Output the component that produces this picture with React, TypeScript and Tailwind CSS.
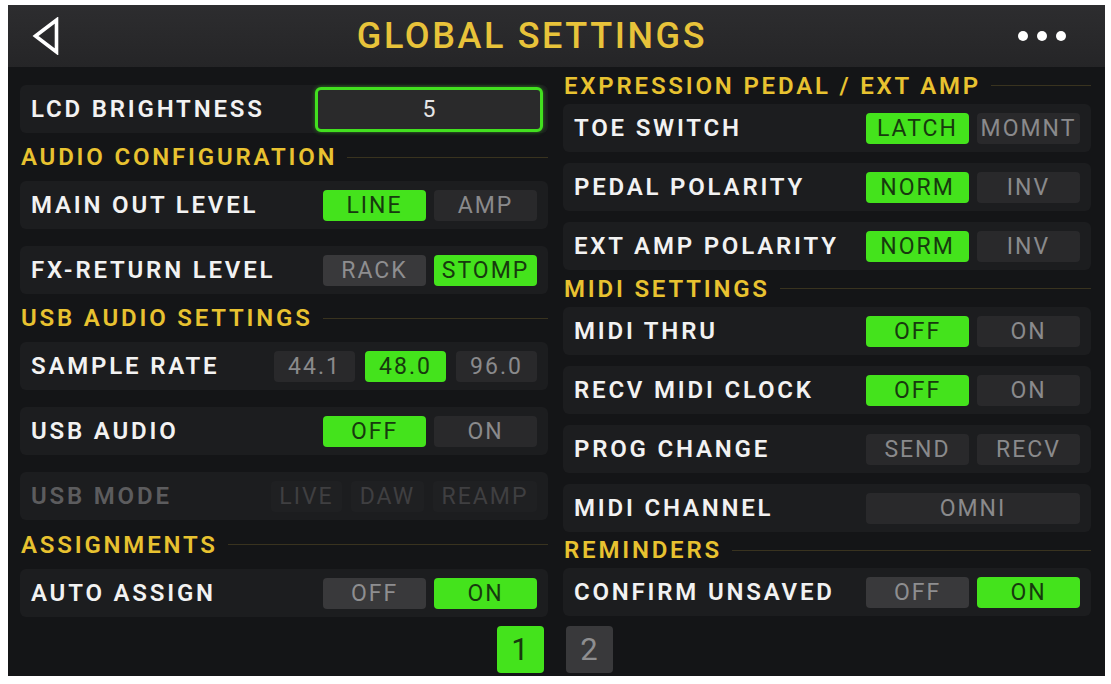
import React from "react"

type Tone = "on" | "off" | "lit" | "disabled"

interface Opt {
  text: string
  tone: Tone
  w: string
}

const toneClass: Record<Tone, string> = {
  on: "bg-[#44e31c] text-[#173a0e]",
  off: "bg-[#29292b] text-[#8a8a8c]",
  lit: "bg-[#39393b] text-[#8e8e90]",
  disabled: "bg-[#1f2022] text-[#3f3f41]",
}

function OptButton({ opt }: { opt: Opt }) {
  return (
    <div
      className={`${opt.w} ${toneClass[opt.tone]} h-[31px] rounded-[4px] flex items-center justify-center text-[23px] leading-none tracking-[2px]`}
    >
      {opt.text}
    </div>
  )
}

function Row({
  label,
  options,
  gap = "gap-[8px]",
  disabled = false,
}: {
  label: string
  options: Opt[]
  gap?: string
  disabled?: boolean
}) {
  return (
    <div className="h-[48px] rounded-[6px] bg-[#1c1d1f] flex items-center justify-between pl-[11px] pr-[11px]">
      <span
        className={`text-[24px] font-semibold tracking-[2.8px] leading-none ${
          disabled ? "text-[#5c5c5e]" : "text-[#f2f2f2]"
        }`}
      >
        {label}
      </span>
      <div className={`flex ${gap}`}>
        {options.map((o) => (
          <OptButton key={o.text} opt={o} />
        ))}
      </div>
    </div>
  )
}

function Section({ title, h }: { title: string; h: string }) {
  return (
    <div className={`${h} flex items-center pl-[1px]`}>
      <span className="text-[24px] font-semibold tracking-[2.8px] leading-none text-[#e8c230]">{title}</span>
      <div className="flex-1 h-px bg-[#39331f] ml-[10px]" />
    </div>
  )
}

const pair = (a: string, at: Tone, b: string, bt: Tone): Opt[] => [
  { text: a, tone: at, w: "w-[103px]" },
  { text: b, tone: bt, w: "w-[103px]" },
]

export default function App() {
  return (
    <div className="w-[1111px] h-[684px] bg-white pl-[8px] pt-[5px] font-['Roboto','Liberation_Sans',sans-serif]">
      <div className="w-[1097px] h-[671px] bg-[#141517] flex flex-col">
        {/* header */}
        <div className="h-[62px] bg-gradient-to-b from-[#2d2d2f] to-[#252527] flex items-center pl-[24px] pr-[39px]">
          <svg width="28" height="38" viewBox="0 0 28 38" className="shrink-0">
            <polygon points="3.5,19 24.5,3 24.5,35" fill="none" stroke="#ffffff" strokeWidth="3.6" strokeLinejoin="miter" />
          </svg>
          <div className="flex-1 text-center pr-[14px] text-[36px] font-medium tracking-[2.6px] leading-none text-[#e8c33a]">
            GLOBAL SETTINGS
          </div>
          <div className="flex gap-[9px] w-[48px]">
            <span className="w-[10px] h-[10px] rounded-full bg-white" />
            <span className="w-[10px] h-[10px] rounded-full bg-white" />
            <span className="w-[10px] h-[10px] rounded-full bg-white" />
          </div>
        </div>

        {/* columns */}
        <div className="grid grid-cols-2 gap-[15px] pl-[12px] pr-[14px]">
          <div className="flex flex-col pt-[18px]">
            <div className="h-[48px] rounded-[6px] bg-[#1c1d1f] flex items-center justify-between pl-[11px] pr-[5px]">
              <span className="text-[24px] font-semibold tracking-[2.8px] leading-none text-[#f2f2f2]">LCD BRIGHTNESS</span>
              <div className="w-[228px] h-[45px] rounded-[6px] border-[3px] border-[#42e01f] bg-[#2a2a2b] shadow-[0_0_4px_#42e01f80] flex items-center justify-center text-[23px] leading-none text-[#e6e6e6]">
                5
              </div>
            </div>
            <Section title="AUDIO CONFIGURATION" h="h-[48px]" />
            <div className="flex flex-col gap-[17px]">
              <Row label="MAIN OUT LEVEL" options={pair("LINE", "on", "AMP", "off")} />
              <Row label="FX-RETURN LEVEL" options={pair("RACK", "lit", "STOMP", "on")} />
            </div>
            <Section title="USB AUDIO SETTINGS" h="h-[48px]" />
            <div className="flex flex-col gap-[17px]">
              <Row
                label="SAMPLE RATE"
                gap="gap-[10px]"
                options={[
                  { text: "44.1", tone: "off", w: "w-[81px]" },
                  { text: "48.0", tone: "on", w: "w-[81px]" },
                  { text: "96.0", tone: "off", w: "w-[81px]" },
                ]}
              />
              <Row label="USB AUDIO" options={pair("OFF", "on", "ON", "off")} />
              <Row
                label="USB MODE"
                disabled
                gap="gap-[9px]"
                options={[
                  { text: "LIVE", tone: "disabled", w: "w-[71px]" },
                  { text: "DAW", tone: "disabled", w: "w-[73px]" },
                  { text: "REAMP", tone: "disabled", w: "w-[104px]" },
                ]}
              />
            </div>
            <Section title="ASSIGNMENTS" h="h-[49px]" />
            <Row label="AUTO ASSIGN" options={pair("OFF", "lit", "ON", "on")} />
          </div>

          <div className="flex flex-col">
            <Section title="EXPRESSION PEDAL / EXT AMP" h="h-[37px]" />
            <div className="flex flex-col gap-[11px]">
              <Row label="TOE SWITCH" options={pair("LATCH", "on", "MOMNT", "off")} />
              <Row label="PEDAL POLARITY" options={pair("NORM", "on", "INV", "off")} />
              <Row label="EXT AMP POLARITY" options={pair("NORM", "on", "INV", "off")} />
            </div>
            <Section title="MIDI SETTINGS" h="h-[37px]" />
            <div className="flex flex-col gap-[11px]">
              <Row label="MIDI THRU" options={pair("OFF", "on", "ON", "off")} />
              <Row label="RECV MIDI CLOCK" options={pair("OFF", "on", "ON", "off")} />
              <Row label="PROG CHANGE" options={pair("SEND", "off", "RECV", "off")} />
              <Row label="MIDI CHANNEL" options={[{ text: "OMNI", tone: "off", w: "w-[214px]" }]} />
            </div>
            <Section title="REMINDERS" h="h-[36px]" />
            <Row label="CONFIRM UNSAVED" options={pair("OFF", "lit", "ON", "on")} />
          </div>
        </div>

        {/* pager */}
        <div className="flex justify-center gap-[22px] pt-[9px] pr-[4px]">
          <div className="w-[47px] h-[47px] rounded-[4px] bg-[#44e31c] text-[#173a0e] flex items-center justify-center text-[31px] leading-none">
            1
          </div>
          <div className="w-[47px] h-[47px] rounded-[4px] bg-[#39393b] text-[#8e8e90] flex items-center justify-center text-[31px] leading-none">
            2
          </div>
        </div>
      </div>
    </div>
  )
}
